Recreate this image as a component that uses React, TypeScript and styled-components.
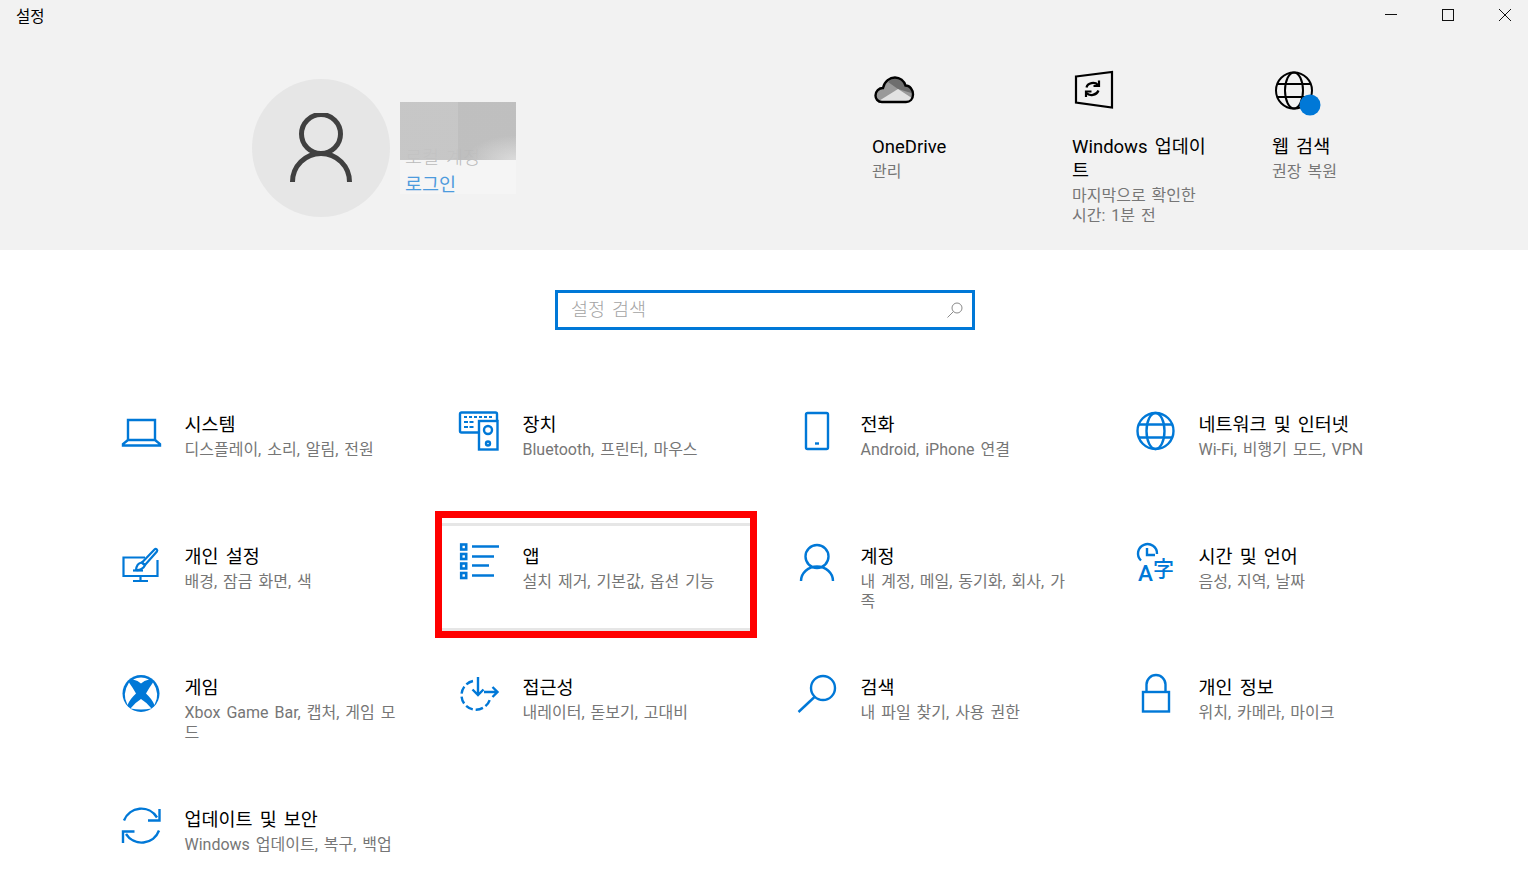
import React from "react";
import styled, { createGlobalStyle } from "styled-components";

const BLUE = "#0078d7";

const GlobalStyle = createGlobalStyle`
  html, body {
    margin: 0;
    padding: 0;
    height: 100%;
    overflow: hidden;
    background: #fff;
  }
  body {
    font-family: Roboto, "Noto Sans CJK KR", sans-serif;
    color: #000;
  }
  *, *::before, *::after {
    box-sizing: border-box;
  }
`;

const Page = styled.div`
  width: 1528px;
  height: 869px;
  overflow: hidden;
  background: #fff;
`;

const Top = styled.header`
  height: 250px;
  background: #f2f2f2;
`;

const TitleBar = styled.div`
  height: 30px;
  display: flex;
  align-items: center;
  justify-content: space-between;
  padding: 0 17px 1px 16px;
  font-size: 15.5px;
`;

const WindowButtons = styled.div`
  display: flex;
  gap: 45px;
  align-items: center;

  svg {
    display: block;
  }
`;

const HeaderBody = styled.div`
  height: 220px;
  display: flex;
  justify-content: space-between;
  align-items: flex-start;
  padding: 0 56px 0 252px;
`;

const Account = styled.div`
  display: flex;
  margin-top: 49px;
`;

const Avatar = styled.div`
  width: 138px;
  height: 138px;
  border-radius: 50%;
  background: #e6e6e6;
  display: flex;
  align-items: center;
  justify-content: center;
`;

const AccountText = styled.div`
  position: relative;
  margin-left: 15px;
  padding-top: 69px;
  width: 111px;
  font-size: 18.5px;
  word-spacing: 2.5px;
`;

const AccountName = styled.div`
  line-height: 20px;
  font-weight: 300;
  color: #a8a8a8;
`;

const SignIn = styled.div`
  line-height: 24px;
  margin-top: 5px;
  color: #1a7fd4;
`;

/* blurred-out block that hides the account name in the screenshot */
const Redaction = styled.div`
  position: absolute;
  left: -5px;
  top: 23px;
  width: 116px;
  height: 58px;
  background:
    radial-gradient(ellipse at 100% 100%, rgba(226, 226, 226, 0.8) 0, rgba(226, 226, 226, 0) 30%),
    linear-gradient(90deg, rgba(196, 196, 196, 0.94) 50%, rgba(188, 188, 188, 0.94) 50%);
  box-shadow: 0 34px 0 0 rgba(255, 255, 255, 0.22);
`;

const QuickLinks = styled.div`
  display: flex;
  margin-top: 40px;
`;

const QuickLink = styled.div`
  width: 200px;
  padding-right: 62px;
`;

const QuickIcon = styled.div`
  height: 65px;

  svg {
    display: block;
    overflow: visible;
  }
`;

const QuickTitle = styled.div`
  font-size: 18.5px;
  line-height: 24px;
  word-spacing: 2.5px;
  word-break: break-all;
`;

const QuickSub = styled.div`
  font-size: 16px;
  line-height: 20px;
  margin-top: 3px;
  word-spacing: 2px;
  color: #767676;
`;

const SearchRow = styled.div`
  display: flex;
  justify-content: center;
  padding: 40px 0 0 2px;
`;

const SearchBox = styled.label`
  width: 420px;
  height: 40px;
  border: 3px solid ${BLUE};
  background: #fff;
  display: flex;
  align-items: center;
  padding: 0 9px 0 13px;

  svg {
    flex: none;
  }
`;

const SearchInput = styled.input`
  flex: 1;
  min-width: 0;
  border: 0;
  outline: 0;
  padding: 0;
  font: inherit;
  font-size: 18.5px;
  word-spacing: 2.5px;
  background: transparent;

  &::placeholder {
    color: #a3a3a3;
    opacity: 1;
    font-weight: 300;
  }
`;

const Grid = styled.main`
  display: grid;
  grid-template-columns: repeat(4, 338px);
  grid-auto-rows: 131.67px;
  padding: 81px 0 0 121px;
`;

const Tile = styled.div<{ $picked?: boolean }>`
  position: relative;
  display: flex;
  gap: 23.5px;

  ${(p) =>
    p.$picked &&
    `
    &::before {
      content: "";
      position: absolute;
      left: -17px;
      top: -20px;
      width: 308px;
      height: 108px;
      border-top: 3px solid #e6e6e6;
      border-bottom: 3px solid #e6e6e6;
    }
    &::after {
      content: "";
      position: absolute;
      left: -24px;
      top: -32px;
      width: 322px;
      height: 127px;
      border: 7px solid #ff0000;
    }
  `}
`;

const TileIcon = styled.div`
  width: 40px;
  height: 40px;
  flex: none;

  svg {
    display: block;
    overflow: visible;
  }
`;

const TileText = styled.div`
  width: 214px;
  padding-top: 2px;
`;

const TileTitle = styled.div`
  font-size: 18.5px;
  line-height: 24px;
  word-spacing: 2.5px;
`;

const TileSub = styled.div`
  font-size: 16px;
  line-height: 20px;
  margin-top: 3px;
  word-spacing: 2px;
  color: #767676;
  word-break: break-all;
`;

const Icon = ({ children, size = 40 }: { children: React.ReactNode; size?: number }) => (
  <svg
    width={size}
    height={size}
    viewBox={`0 0 ${size} ${size}`}
    fill="none"
    stroke={BLUE}
    strokeWidth="2.4"
  >
    {children}
  </svg>
);

const SystemIcon = () => (
  <Icon>
    <path d="M7 29V9h27v20" />
    <path d="M7 29l-5 4v1.500h37V33l-5-4z" />
  </Icon>
);

const DevicesIcon = () => (
  <Icon>
    <path d="M19 21.500H2.500a1.500 1.500 0 0 1-1.500-1.500V3a1.500 1.500 0 0 1 1.500-1.500h34A1.500 1.500 0 0 1 38 3v7" />
    <rect x="20" y="10" width="18.500" height="28.500" />
    <circle cx="29" cy="19" r="4" />
    <circle cx="29" cy="32.500" r="2" />
    <path d="M5 6h29" strokeWidth="2" strokeDasharray="3 2" />
    <path d="M5 11h11M5 16h11" strokeWidth="2" strokeDasharray="4 1.500" />
  </Icon>
);

const PhoneIcon = () => (
  <Icon>
    <rect x="9" y="2" width="22" height="36" rx="1.500" />
    <path d="M18 32.500h4" />
  </Icon>
);

const NetworkIcon = () => (
  <Icon>
    <circle cx="20.500" cy="20" r="18" />
    <ellipse cx="20.500" cy="20" rx="9" ry="18" />
    <path d="M4 13.500h33M4 26.500h33" />
  </Icon>
);

const PersonalizeIcon = () => (
  <Icon>
    <path d="M24 14.500H2.500V33h34V17" strokeWidth="2.200" />
    <path d="M19.500 33v4M12 38h15" strokeWidth="2.200" />
    <path d="M12 27.500h10" strokeWidth="2.200" />
    <path d="M21 19.500L33.500 6.500c1.500-1.500 3.500.5 2.400 2L24 22z" strokeWidth="2.200" />
    <path d="M20.500 19.500c-3 .5-5 2.500-5.500 7.500 3.500.5 8-1.500 9-5z" strokeWidth="2.200" />
  </Icon>
);

const AppsIcon = () => (
  <Icon>
    <rect x="2.200" y="1.500" width="5" height="5" strokeWidth="2.600" />
    <rect x="2.200" y="11" width="5" height="5" strokeWidth="2.600" />
    <rect x="2.200" y="20.500" width="5" height="5" strokeWidth="2.600" />
    <rect x="2.200" y="30" width="5" height="5" strokeWidth="2.600" />
    <path d="M13 3.500h27M13 13.500h22M13 22.500h17M13 32.500h22" />
  </Icon>
);

const AccountIcon = () => (
  <Icon>
    <circle cx="20" cy="13.500" r="11.500" />
    <path d="M4 38a16 14.500 0 0 1 32 0" />
  </Icon>
);

const TimeIcon = () => (
  <Icon>
    <path d="M6 17.500A9.500 9.500 0 1 1 22 11" />
    <path d="M12 5v7h8" />
    <text x="3" y="38" fontSize="22.500" fontWeight="500" fill={BLUE} stroke="none">
      A
    </text>
    <text x="18" y="33" fontSize="21" fontWeight="500" fill={BLUE} stroke="none">
      字
    </text>
  </Icon>
);

const XboxIcon = () => (
  <Icon>
    <circle cx="20" cy="19.500" r="18.500" fill={BLUE} stroke="none" />
    <path d="M12 5.500Q20 1.500 28 5.500 23 6.500 20 9.500 17 6.500 12 5.500z" fill="#fff" stroke="none" />
    <path d="M8 8.500Q12 14 15 19.500 9 25 6.500 31 .5 20 8 8.500z" fill="#fff" stroke="none" />
    <path d="M32 8.500Q28 14 25 19.500 31 25 33.500 31 39.500 20 32 8.500z" fill="#fff" stroke="none" />
    <path d="M20 25Q13.500 29 9.500 34.500 20 36.500 30.500 34.500 26.500 29 20 25z" fill="#fff" stroke="none" />
  </Icon>
);

const EaseIcon = () => (
  <Icon>
    <path d="M14 7A14.500 14.500 0 1 0 31 25" strokeDasharray="7.500 3" />
    <path d="M19 3v18M13.500 15.500l5.500 5.500 5.500-5.500" />
    <path d="M25 18h13M33.500 13l5 5-5 5" />
  </Icon>
);

const SearchIcon = () => (
  <Icon>
    <circle cx="26" cy="14" r="12" />
    <path d="M17.500 23L1.500 38" />
  </Icon>
);

const PrivacyIcon = () => (
  <Icon>
    <rect x="8" y="18" width="26" height="19.500" />
    <path d="M11.500 18V10.500a9.500 9.500 0 0 1 19 0V18" />
  </Icon>
);

const UpdateIcon = () => (
  <Icon>
    <path d="M3 14.500A18.500 18.500 0 0 1 36 11.500" />
    <path d="M38.500 3v11.500H27" />
    <path d="M38 24.500A18.500 18.500 0 0 1 5 28" />
    <path d="M2 37V25.500h11.500" />
  </Icon>
);

const CLOUD =
  "M10 32C5.500 32 3.500 28.500 3.500 25.500 3.500 21 7 18 11 18 12.500 11 18 7.500 23 7.500 28 7.500 32 11 33.500 15.500 38 15.500 41 20 41 24.500 41 29 38 32 34 32z";

const OneDriveIcon = () => (
  <svg width="44" height="40" viewBox="0 0 44 40">
    <clipPath id="cloud">
      <path d={CLOUD} />
    </clipPath>
    <g clipPath="url(#cloud)">
      <rect x="0" y="0" width="44" height="40" fill="#9a9a9a" />
      <path d="M16 12L23 5l20 5v14l-17-5z" fill="#6e6e6e" />
      <path d="M2 34l24-15 17 11v6z" fill="#e2e2e2" />
    </g>
    <path d={CLOUD} fill="none" stroke="#000" strokeWidth="2.400" />
  </svg>
);

const tiles = [
  { title: "시스템", sub: "디스플레이, 소리, 알림, 전원", icon: <SystemIcon /> },
  { title: "장치", sub: "Bluetooth, 프린터, 마우스", icon: <DevicesIcon /> },
  { title: "전화", sub: "Android, iPhone 연결", icon: <PhoneIcon /> },
  { title: "네트워크 및 인터넷", sub: "Wi-Fi, 비행기 모드, VPN", icon: <NetworkIcon /> },
  { title: "개인 설정", sub: "배경, 잠금 화면, 색", icon: <PersonalizeIcon /> },
  { title: "앱", sub: "설치 제거, 기본값, 옵션 기능", icon: <AppsIcon />, picked: true },
  { title: "계정", sub: "내 계정, 메일, 동기화, 회사, 가족", icon: <AccountIcon /> },
  { title: "시간 및 언어", sub: "음성, 지역, 날짜", icon: <TimeIcon /> },
  { title: "게임", sub: "Xbox Game Bar, 캡처, 게임 모드", icon: <XboxIcon /> },
  { title: "접근성", sub: "내레이터, 돋보기, 고대비", icon: <EaseIcon /> },
  { title: "검색", sub: "내 파일 찾기, 사용 권한", icon: <SearchIcon /> },
  { title: "개인 정보", sub: "위치, 카메라, 마이크", icon: <PrivacyIcon /> },
  { title: "업데이트 및 보안", sub: "Windows 업데이트, 복구, 백업", icon: <UpdateIcon /> },
];

const App = () => {
  return (
    <Page>
      <GlobalStyle />
      <Top>
        <TitleBar>
          <span>설정</span>
          <WindowButtons>
            <svg width="12" height="12" viewBox="0 0 12 12" stroke="#111" fill="none">
              <path d="M0 5.500h12" />
            </svg>
            <svg width="12" height="12" viewBox="0 0 12 12" stroke="#111" fill="none">
              <rect x="0.500" y="0.500" width="11" height="11" />
            </svg>
            <svg width="12" height="12" viewBox="0 0 12 12" stroke="#111" fill="none">
              <path d="M0 0l12 12M12 0L0 12" />
            </svg>
          </WindowButtons>
        </TitleBar>
        <HeaderBody>
          <Account>
            <Avatar>
              <svg width="64" height="70" viewBox="0 0 64 70" fill="none" stroke="#404040" strokeWidth="5">
                <circle cx="32" cy="21" r="19.500" />
                <path d="M3.500 69a28.500 28.500 0 0 1 57 0" />
              </svg>
            </Avatar>
            <AccountText>
              <AccountName>로컬 계정</AccountName>
              <SignIn>로그인</SignIn>
              <Redaction />
            </AccountText>
          </Account>
          <QuickLinks>
            <QuickLink>
              <QuickIcon>
                <OneDriveIcon />
              </QuickIcon>
              <QuickTitle>OneDrive</QuickTitle>
              <QuickSub>관리</QuickSub>
            </QuickLink>
            <QuickLink>
              <QuickIcon>
                <svg width="44" height="40" viewBox="0 0 44 40" fill="none" stroke="#000" strokeWidth="2.200">
                  <path d="M4 6.500L40 2v35.500L4 32.500z" />
                  <path d="M14.500 17.500c1-5 8.500-6 11.500-2.500M14.500 23c3 3.500 10 2.500 12-2.500" />
                  <path d="M27 10.500V16h-5.500M14 27v-5.500h5.500" />
                </svg>
              </QuickIcon>
              <QuickTitle>Windows 업데이트</QuickTitle>
              <QuickSub>마지막으로 확인한 시간: 1분 전</QuickSub>
            </QuickLink>
            <QuickLink>
              <QuickIcon>
                <svg width="50" height="46" viewBox="0 0 50 46" fill="none" stroke="#000" strokeWidth="2">
                  <circle cx="22" cy="20.500" r="18" />
                  <ellipse cx="22" cy="20.500" rx="9" ry="18" />
                  <path d="M5 14h34M5 27h34" />
                  <circle cx="38" cy="35" r="10.500" fill={BLUE} stroke="none" />
                </svg>
              </QuickIcon>
              <QuickTitle>웹 검색</QuickTitle>
              <QuickSub>권장 복원</QuickSub>
            </QuickLink>
          </QuickLinks>
        </HeaderBody>
      </Top>
      <SearchRow>
        <SearchBox>
          <SearchInput placeholder="설정 검색" readOnly />
          <svg width="16" height="16" viewBox="0 0 16 16" fill="none" stroke="#8a8a8a">
            <circle cx="10" cy="6" r="5" />
            <path d="M6.500 9.500L.5 15.500" />
          </svg>
        </SearchBox>
      </SearchRow>
      <Grid>
        {tiles.map((t) => (
          <Tile key={t.title} $picked={t.picked}>
            <TileIcon>{t.icon}</TileIcon>
            <TileText>
              <TileTitle>{t.title}</TileTitle>
              <TileSub>{t.sub}</TileSub>
            </TileText>
          </Tile>
        ))}
      </Grid>
    </Page>
  );
};

export default App;
